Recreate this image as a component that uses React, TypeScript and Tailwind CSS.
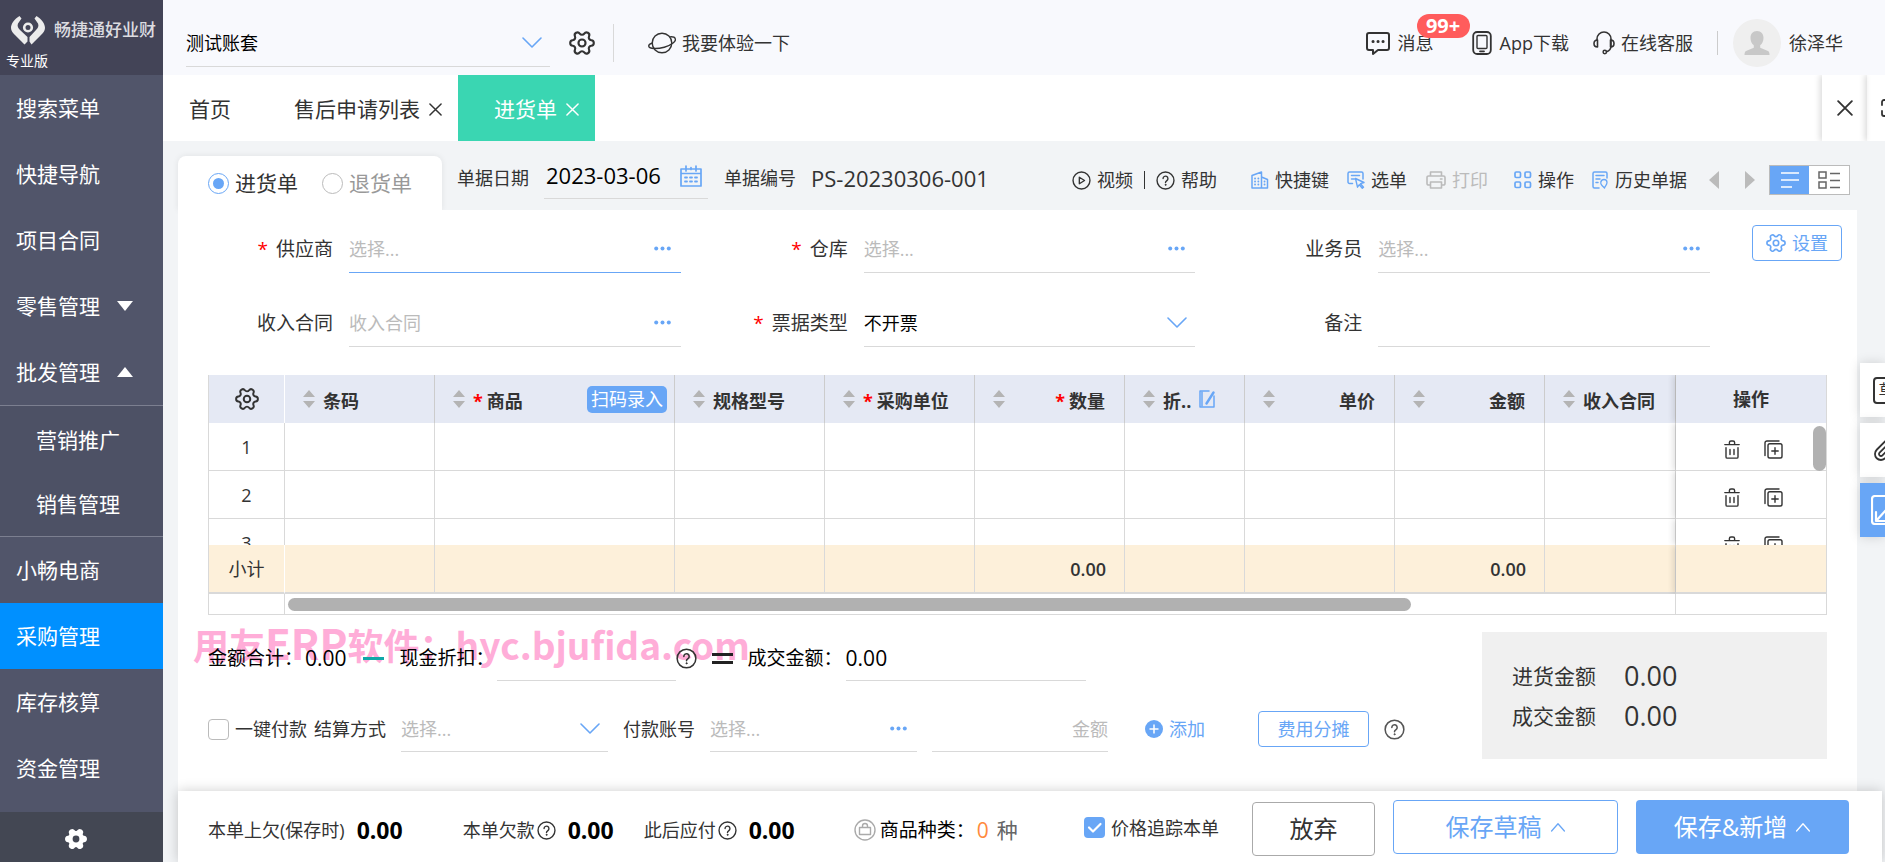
import type { ReactNode } from 'react';
import { clsx } from 'clsx';

const menuTop = [
  { label: '搜索菜单' },
  { label: '快捷导航' },
  { label: '项目合同' },
  { label: '零售管理', arrow: 'down' },
  { label: '批发管理', arrow: 'up' },
];

const subMenu = ['营销推广', '销售管理'];

const menuBottom = [
  { label: '小畅电商' },
  { label: '采购管理', active: true },
  { label: '库存核算' },
  { label: '资金管理' },
];

const columns = [
  { key: 'barcode', label: '条码', width: 'w-[150px]' },
  { key: 'goods', label: '商品', width: 'w-[240px]', required: true, scan: true },
  { key: 'spec', label: '规格型号', width: 'w-[150px]' },
  { key: 'unit', label: '采购单位', width: 'w-[150px]', required: true },
  { key: 'qty', label: '数量', width: 'w-[150px]', required: true, right: true, total: '0.00' },
  { key: 'discount', label: '折..', width: 'w-[120px]', edit: true },
  { key: 'price', label: '单价', width: 'w-[150px]', right: true },
  { key: 'amount', label: '金额', width: 'w-[150px]', right: true, total: '0.00' },
  { key: 'contract', label: '收入合同', width: 'w-[131px]' },
];

const rows = [1, 2, 3];

/* ---------- icons ---------- */

type IconProps = { className?: string };

function Svg({ className, children, box = '0 0 24 24' }: IconProps & { children: ReactNode; box?: string }) {
  return (
    <svg
      viewBox={box}
      className={clsx('shrink-0', className)}
      fill="none"
      stroke="currentColor"
      strokeWidth="1.8"
      strokeLinecap="round"
      strokeLinejoin="round"
      aria-hidden="true"
    >
      {children}
    </svg>
  );
}

const gearPath =
  'M9.671 4.136a2.34 2.34 0 0 1 4.659 0 2.34 2.34 0 0 0 3.319 1.915 2.34 2.34 0 0 1 2.33 4.033 2.34 2.34 0 0 0 0 3.831 2.34 2.34 0 0 1-2.33 4.033 2.34 2.34 0 0 0-3.319 1.915 2.34 2.34 0 0 1-4.659 0 2.34 2.34 0 0 0-3.32-1.915 2.34 2.34 0 0 1-2.33-4.033 2.34 2.34 0 0 0 0-3.831A2.34 2.34 0 0 1 6.35 6.051a2.34 2.34 0 0 0 3.319-1.915';

function Gear({ className }: IconProps) {
  return (
    <Svg className={className} box="1 1 22 22">
      <path d={gearPath} transform="rotate(30 12 12)" />
      <circle cx="12" cy="12" r="3" />
    </Svg>
  );
}

function Chevron({ className, up }: IconProps & { up?: boolean }) {
  return (
    <Svg className={className} box="0 0 20 12">
      <path d={up ? 'M2 11l8-9 8 9' : 'M1 1l9 9 9-9'} strokeWidth="1.6" />
    </Svg>
  );
}

function Close({ className }: IconProps) {
  return (
    <Svg className={className} box="0 0 14 14">
      <path d="M1 1l12 12M13 1L1 13" strokeWidth="1.6" />
    </Svg>
  );
}

function Help({ className }: IconProps) {
  return (
    <Svg className={className} box="0 0 22 22">
      <circle cx="11" cy="11" r="9.8" strokeWidth="1.6" />
      <path d="M8.2 8.8a2.8 2.8 0 1 1 4.4 2.3c-1 .7-1.6 1.2-1.6 2.3" strokeWidth="1.6" />
      <circle cx="11" cy="16" r=".6" fill="currentColor" strokeWidth="1" />
    </Svg>
  );
}

function Play({ className }: IconProps) {
  return (
    <Svg className={className} box="0 0 22 22">
      <circle cx="11" cy="11" r="9.8" strokeWidth="1.6" />
      <path d="M8.5 7.2v7.6l6-3.8z" strokeWidth="1.6" />
    </Svg>
  );
}

function Dots() {
  return (
    <svg viewBox="0 0 17 5" className="h-[5px] w-[17px]" fill="currentColor" aria-hidden="true">
      <circle cx="2.2" cy="2.5" r="2" />
      <circle cx="8.5" cy="2.5" r="2" />
      <circle cx="14.8" cy="2.5" r="2" />
    </svg>
  );
}

function SortArrows() {
  return (
    <svg viewBox="0 0 12 18" className="h-[18px] w-3 shrink-0" fill="#b4b4b4" aria-hidden="true">
      <path d="M6 0l6 7H0zM6 18l6-7H0z" />
    </svg>
  );
}

function Trash() {
  return (
    <Svg className="h-[19px] w-4" box="0 0 16 19">
      <path d="M.8 4.6h14.4M5.4 4.4V2.6a1.6 1.6 0 0 1 1.6-1.6h2a1.6 1.6 0 0 1 1.6 1.6v1.8M2 7.6v9.3a1.2 1.2 0 0 0 1.2 1.2h9.6a1.2 1.2 0 0 0 1.2-1.2V7.6M6 9.5v5M10 9.5v5" strokeWidth="1.4" />
    </Svg>
  );
}

function CopyPlus() {
  return (
    <Svg className="h-[19px] w-[19px]" box="0 0 19 19">
      <rect x="4" y="3.8" width="14" height="14.2" rx="1.8" strokeWidth="1.4" />
      <path d="M11 7.8v6.4M7.8 11h6.4M1 15.5V3A2 2 0 0 1 3 1h12" strokeWidth="1.4" />
    </Svg>
  );
}

function Logo() {
  return (
    <svg viewBox="0 0 36 30" className="h-[30px] w-9 shrink-0" fill="none" stroke="#ececec" aria-hidden="true">
      <path d="M9.5 1C4.5 4 1 8.500 1 13c0 3 2 5 4.500 7.500L14.500 29.500l3-3v-4.500L10 15c-2-2-3-4-2-6.500L11.500 3.500z" fill="#ececec" stroke="none" />
      <path d="M26.500 1C31.500 4 35 8.500 35 13c0 3-2 5-4.500 7.500L21.500 29.500l-2-3v-4.500L26 15c2-2 3-4 2-6.500L24.500 3.500z" fill="#ececec" stroke="none" />
      <circle cx="18" cy="12.500" r="3.800" strokeWidth="2.600" />
    </svg>
  );
}

/* ---------- small parts ---------- */

function Tool({ icon, label, className }: { icon: ReactNode; label: string; className?: string }) {
  return (
    <button type="button" className={clsx('flex shrink-0 items-center gap-1.5 whitespace-nowrap', className)}>
      {icon}
      {label}
    </button>
  );
}

function Radio({ label, checked }: { label: string; checked?: boolean }) {
  return (
    <label className={clsx('flex items-center gap-1.5 text-[21px]', checked ? 'text-[#333]' : 'text-[#999]')}>
      <input
        type="radio"
        name="orderType"
        defaultChecked={checked}
        className="h-[21px] w-[21px] appearance-none rounded-full border border-[#bbb] bg-white bg-clip-content p-1 checked:border-[#68a6f6] checked:bg-[#68a6f6]"
      />
      {label}
    </label>
  );
}

type FieldProps = {
  id: string;
  label: string;
  placeholder?: string;
  required?: boolean;
  focused?: boolean;
  lookup?: boolean;
  option?: string;
};

function Field({ id, label, placeholder, required, focused, lookup, option }: FieldProps) {
  return (
    <div className="flex items-center gap-4">
      <label htmlFor={id} className="flex w-[155px] shrink-0 items-center justify-end gap-2 text-[19px]">
        {required && <span className="text-[#f00]">*</span>}
        {label}
      </label>
      <div className={clsx('relative flex h-12 flex-1 items-center border-b', focused ? 'border-[#68a6f6]' : 'border-[#d9d9d9]')}>
        {option ? (
          <select id={id} className="h-full w-full appearance-none text-lg text-black outline-none">
            <option>{option}</option>
          </select>
        ) : (
          <input id={id} placeholder={placeholder} className="h-full w-full text-lg outline-none placeholder:text-[#bbb]" />
        )}
        {option && <Chevron className="pointer-events-none absolute right-2 h-3 w-5 text-[#68a6f6]" />}
        {lookup && (
          <button type="button" aria-label="更多" className="absolute right-2.5 text-[#68a6f6]">
            <Dots />
          </button>
        )}
      </div>
    </div>
  );
}

/* ---------- page parts ---------- */

function Sidebar() {
  return (
    <aside className="flex w-[163px] shrink-0 flex-col bg-[#51556a] text-[21px] text-white">
      <div className="flex h-[75px] flex-col justify-end gap-1.5 bg-[#434457] pb-1">
        <div className="flex items-center gap-2 pl-2.5">
          <Logo />
          <span className="text-[17px] leading-6 font-medium whitespace-nowrap text-[#dcdce0]">畅捷通好业财</span>
        </div>
        <span className="pl-1.5 text-sm leading-5">专业版</span>
      </div>
      <nav className="flex flex-1 flex-col">
        {menuTop.map((item) => (
          <a key={item.label} href="#" className="flex h-[66px] items-center gap-[17px] pl-4">
            {item.label}
            {item.arrow && (
              <svg viewBox="0 0 16 10" className="h-2.5 w-4" fill="currentColor" aria-hidden="true">
                <path d={item.arrow === 'up' ? 'M8 0l8 10H0z' : 'M8 10L0 0h16z'} />
              </svg>
            )}
          </a>
        ))}
        <div className="border-y border-[#7c7f90] bg-[#4d5165] pt-0.5">
          {subMenu.map((label) => (
            <a key={label} href="#" className="flex h-16 items-center pl-9">
              {label}
            </a>
          ))}
        </div>
        {menuBottom.map((item) => (
          <a key={item.label} href="#" className={clsx('flex h-[66px] items-center pl-4', item.active && 'bg-[#0090ff]')}>
            {item.label}
          </a>
        ))}
      </nav>
      <button type="button" aria-label="设置" className="flex h-[50px] items-center bg-[#434753] pt-1 pl-[65px]">
        <svg viewBox="1 1 22 22" className="h-[22px] w-[22px]" aria-hidden="true">
          <path d={gearPath} transform="rotate(30 12 12)" fill="#fff" stroke="#fff" strokeWidth="2" />
          <circle cx="12" cy="12" r="3.400" fill="#434753" />
        </svg>
      </button>
    </aside>
  );
}

function TopBar() {
  return (
    <header className="flex h-[75px] shrink-0 items-center bg-[#f8f9fd] pt-[11px] pr-[42px] pl-[23px] text-lg text-[#333]">
      <div className="relative flex h-12 w-[364px] items-center border-b border-[#d9d9d9]">
        <select aria-label="账套" className="h-full w-full appearance-none text-lg text-black outline-none">
          <option>测试账套</option>
        </select>
        <Chevron className="pointer-events-none absolute right-2 h-3 w-5 text-[#68a6f6]" />
      </div>
      <button type="button" aria-label="设置" className="ml-[19px]">
        <Gear className="h-[26px] w-[26px]" />
      </button>
      <span className="mr-5 ml-[18px] h-[38px] w-px bg-[#d9d9d9]" />
      <a href="#" className="ml-[14px] flex items-center gap-1.5">
        <Svg className="h-6 w-7" box="0 0 28 24">
          <circle cx="14" cy="12" r="9.800" strokeWidth="1.400" />
          <path d="M4.500 12C1.800 12.800.5 14 .8 15.200c.8 2.800 8 3 15.500 1S28.500 10 27.200 7.500c-.5-1.300-2-1.800-4.500-1.700" strokeWidth="1.400" />
        </Svg>
        我要体验一下
      </a>

      <div className="ml-auto flex items-center">
        <a href="#" className="relative flex items-center gap-2">
          <Svg className="h-6 w-6 text-[#333]">
            <path d="M3 2h18a2 2 0 0 1 2 2v13a2 2 0 0 1-2 2H12l-5 4v-4H3a2 2 0 0 1-2-2V4a2 2 0 0 1 2-2z" strokeWidth="2" />
            <path d="M7 10.500h.1M12 10.500h.1M17 10.500h.1" strokeWidth="3" />
          </Svg>
          消息
          <span className="absolute -top-[15px] left-[51px] flex h-6 w-[53px] items-center justify-center rounded-full bg-[#ff5c5c] text-xl font-bold text-white">
            99+
          </span>
        </a>
        <a href="#" className="ml-[38px] flex items-center gap-2">
          <Svg className="h-6 w-5" box="0 0 20 24">
            <rect x="1.200" y="1" width="17.600" height="22" rx="4" />
            <rect x="5" y="4.500" width="10" height="13" rx="1" strokeWidth="1.400" />
            <path d="M8 20.300h4" />
          </Svg>
          App下载
        </a>
        <a href="#" className="ml-6 flex items-center gap-1.5">
          <Svg className="h-6 w-[22px]" box="0 0 22 24">
            <path d="M4 8.500V8a7 7 0 0 1 14 0v7c0 3-2 5-4.500 5.800" strokeWidth="1.600" />
            <path d="M4.500 9C2 9 1 10.500 1 12.500S2 16 4.500 16zM17.500 9c2.500 0 3.500 1.500 3.500 3.500S20 16 17.500 16z" strokeWidth="1.600" />
            <circle cx="11.800" cy="21" r="1.700" strokeWidth="1.500" />
          </Svg>
          在线客服
        </a>
        <span className="ml-6 h-6 w-px bg-[#ccc]" />
        <a href="#" className="ml-[15px] flex items-center gap-2">
          <svg viewBox="0 0 48 48" className="h-12 w-12" aria-hidden="true">
            <circle cx="24" cy="24" r="24" fill="#efefef" />
            <path d="M24 12c-4.200 0-6.500 3-6.500 7 0 3.200 1.300 5.800 3.300 7.200v2.600L13 32c-1 .6-1.500 2-1.500 4h25c0-2-.5-3.400-1.500-4l-7.800-3.200v-2.600c2-1.400 3.300-4 3.300-7.200 0-4-2.300-7-6.500-7z" fill="#c8c8c8" />
          </svg>
          徐泽华
        </a>
      </div>
    </header>
  );
}

function TabBar() {
  return (
    <div className="flex h-[66px] shrink-0 overflow-hidden bg-white text-[21px] text-[#333]">
      <button type="button" className="pt-0.5 pr-[31px] pl-[26px]">首页</button>
      <div className="flex items-center gap-[9px] pt-0.5 pr-4 pl-8">
        <button type="button">售后申请列表</button>
        <button type="button" aria-label="关闭">
          <Close className="h-[13px] w-[13px]" />
        </button>
      </div>
      <div className="flex items-center gap-[9px] bg-[#3ad6b2] pt-0.5 pr-4 pl-9 text-white">
        <button type="button">进货单</button>
        <button type="button" aria-label="关闭">
          <Close className="h-[13px] w-[13px]" />
        </button>
      </div>
      <div className="ml-auto flex">
        <button type="button" aria-label="关闭全部" className="w-[45px] pl-[15px] shadow-[-2px_0_6px_rgba(0,0,0,0.15)]">
          <Close className="h-4 w-4" />
        </button>
        <button type="button" aria-label="全屏" className="w-[18px] overflow-hidden pl-[14px] shadow-[-2px_0_6px_rgba(0,0,0,0.15)]">
          <Svg className="h-[18px] w-[18px]" box="0 0 18 18">
            <path d="M1 6V3a2 2 0 0 1 2-2h3M12 1h3a2 2 0 0 1 2 2v3M1 12v3a2 2 0 0 0 2 2h3M12 17h3a2 2 0 0 0 2-2v-3" />
          </Svg>
        </button>
      </div>
    </div>
  );
}

function DocBar() {
  return (
    <div className="flex shrink-0 pt-[15px] pr-[35px] text-lg text-[#333]">
      <div className="flex h-[54px] w-[264px] shrink-0 items-center gap-6 rounded-t-lg bg-white pl-[30px] shadow-[0_0_6px_rgba(0,0,0,0.08)]">
        <Radio label="进货单" checked />
        <Radio label="退货单" />
      </div>
      <div className="flex flex-1 items-center pb-2.5 pl-[15px]">
        <label htmlFor="docDate" className="shrink-0">单据日期</label>
        <div className="ml-[15px] flex h-[42px] w-[164px] shrink-0 items-center justify-between border-b border-[#d9d9d9] pr-1.5 pb-1">
          <input id="docDate" defaultValue="2023-03-06" className="w-[122px] pl-0.5 text-[22px] text-black outline-none" />
          <Svg className="h-[22px] w-[22px] text-[#68a6f6]" box="0 0 22 22">
            <path d="M1 4h20v17H1zM1 8.500h20M6 1v5M16 1v5M11 2.500v2" strokeWidth="1.700" />
            <path d="M5 12.500h12M5 16.500h12" strokeWidth="1.800" strokeDasharray="2 3" />
          </Svg>
        </div>
        <span className="ml-4 shrink-0">单据编号</span>
        <span className="ml-[15px] text-[22px]">PS-20230306-001</span>

        <div className="ml-auto flex items-center pt-1">
          <Tool icon={<Play className="h-[19px] w-[19px]" />} label="视频" />
          <span className="mx-[11px] h-[18px] w-px bg-[#333]" />
          <Tool icon={<Help className="h-[19px] w-[19px]" />} label="帮助" />
          <Tool
            className="ml-[34px]"
            label="快捷键"
            icon={
              <Svg className="h-[18px] w-[18px] text-[#68a6f6]" box="0 0 18 18">
                <path d="M1 4.500L10.500 1v16H1zM10.500 6l6 2.500V17h-6" strokeWidth="1.500" />
                <path d="M4 7.500h.1M7.300 7.500h.1M4 10.500h.1M7.300 10.500h.1M4 13.500h.1M7.300 13.500h.1M13.500 10.500h.1M13.500 13.500h.1" strokeWidth="1.800" />
              </Svg>
            }
          />
          <Tool
            className="ml-[18px]"
            label="选单"
            icon={
              <Svg className="h-[18px] w-[18px] text-[#68a6f6]" box="0 0 18 18">
                <path d="M5.500 12.500H2.500A1.500 1.500 0 0 1 1 11V2.500A1.500 1.500 0 0 1 2.500 1h12A1.500 1.500 0 0 1 16 2.500V8M4.500 4.500h8M4.500 8h3" strokeWidth="1.500" />
                <path d="M8.500 7.500l8.500 4-3.500 1.200 3 3.500-1.200 1-3-3.500-1.800 2.500z" strokeWidth="1.400" />
              </Svg>
            }
          />
          <Tool
            className="ml-[19px] text-[#bbb]"
            label="打印"
            icon={
              <Svg className="h-[18px] w-5" box="0 0 20 18">
                <path d="M4.500 5V1h11v4M4.500 14H2.500A1.500 1.500 0 0 1 1 12.500v-6A1.500 1.500 0 0 1 2.500 5h15A1.500 1.500 0 0 1 19 6.500v6a1.500 1.500 0 0 1-1.500 1.500h-2M4.500 11h11v6h-11zM14.500 8h1.500" strokeWidth="1.600" />
              </Svg>
            }
          />
          <Tool
            className="ml-[26px]"
            label="操作"
            icon={
              <Svg className="h-[18px] w-[18px] text-[#68a6f6]" box="0 0 18 18">
                <rect x="1" y="1" width="5.500" height="5.500" rx="1.200" strokeWidth="1.700" />
                <rect x="11" y="1" width="5.500" height="5.500" rx="1.200" strokeWidth="1.700" />
                <rect x="1" y="11" width="5.500" height="5.500" rx="1.200" strokeWidth="1.700" />
                <rect x="11" y="11" width="5.500" height="5.500" rx="1.200" strokeWidth="1.700" />
              </Svg>
            }
          />
          <Tool
            className="ml-[18px]"
            label="历史单据"
            icon={
              <Svg className="h-[18px] w-[17px] text-[#68a6f6]" box="0 0 17 18">
                <path d="M7 17H2.500A1.500 1.500 0 0 1 1 15.500v-13A1.500 1.500 0 0 1 2.500 1h11A1.500 1.500 0 0 1 15 2.500V7M4 4.500h8M4 8h4M4 11.500h2" strokeWidth="1.500" />
                <path d="M12 8.500c1.500 0 3 1 3 3 0 2.500-2 3.500-2.500 5.500L10 14.500c-1-1-1.500-2-1.200-3.500.4-1.500 1.700-2.500 3.200-2.500z" strokeWidth="1.300" />
              </Svg>
            }
          />
          <button type="button" aria-label="上一张" className="ml-[22px]">
            <svg viewBox="0 0 10 18" className="h-[18px] w-2.5" fill="#bbb"><path d="M10 0v18L0 9z" /></svg>
          </button>
          <button type="button" aria-label="下一张" className="ml-[26px]">
            <svg viewBox="0 0 10 18" className="h-[18px] w-2.5" fill="#bbb"><path d="M0 0v18l10-9z" /></svg>
          </button>
          <div className="ml-[14px] flex h-[30px] w-[81px] shrink-0 border border-[#bbb] bg-white">
            <button type="button" aria-label="列表" className="flex w-[39px] items-center justify-center bg-[#68a6f6] text-white">
              <Svg className="h-4 w-[18px]" box="0 0 18 16">
                <path d="M0 1h18M0 8h18M0 15h11" strokeWidth="1.600" strokeLinecap="butt" />
              </Svg>
            </button>
            <button type="button" aria-label="卡片" className="flex flex-1 items-center justify-center text-[#666]">
              <Svg className="h-[18px] w-[22px]" box="0 0 22 18">
                <path d="M1 1h7v6H1zM1 11h7v6H1zM12 2.500h10M12 9.500h10M12 16.500h10" strokeWidth="1.500" strokeLinejoin="miter" strokeLinecap="butt" />
              </Svg>
            </button>
          </div>
        </div>
      </div>
    </div>
  );
}

const fixedShadow = 'shadow-[-3px_0_6px_rgba(0,0,0,0.12)] [clip-path:inset(0_0_0_-8px)]';

function GoodsTable() {
  return (
    <div className="mx-[30px] mt-7 border-x border-[#d9d9d9] text-lg text-[#333]">
      <table className="w-full table-fixed border-separate border-spacing-0">
        <thead>
          <tr className="h-12 bg-[#e5e9f4] text-left">
            <th className="w-[76px] border-r border-white">
              <button type="button" aria-label="列设置" className="flex w-full justify-center">
                <Gear className="h-6 w-6" />
              </button>
            </th>
            {columns.map((col) => (
              <th key={col.key} className={clsx('border-r border-[#ccc] font-bold', col.width)}>
                <div className="flex items-center gap-2 pr-[7px] pl-[18px] whitespace-nowrap">
                  <SortArrows />
                  <span className={clsx('flex items-center gap-1 pt-1', col.right && 'ml-auto pr-3')}>
                    {col.required && <span className="text-[#f00]">*</span>}
                    {col.label}
                  </span>
                  {col.scan && (
                    <button type="button" className="ml-auto h-[27px] rounded-[5px] bg-[#68a6f6] px-1 leading-6 font-normal text-white">
                      扫码录入
                    </button>
                  )}
                  {col.edit && (
                    <Svg className="h-[18px] w-4 text-[#68a6f6]" box="0 0 16 18">
                      <path d="M10 1H1v16h14V6" strokeWidth="1.500" />
                      <path d="M3 2v14" strokeWidth="1.500" />
                      <path d="M14.500 2.500L7.500 13.500" strokeWidth="2.400" />
                    </Svg>
                  )}
                </div>
              </th>
            ))}
            <th className={clsx('bg-[#e5e9f4] text-center font-bold', fixedShadow)}>操作</th>
          </tr>
        </thead>
        <tbody>
          {rows.map((n) => {
            const cut = n === rows.length;
            const line = cut ? '' : 'border-b';
            return (
              <tr key={n}>
                <td className={clsx('border-r border-[#d9d9d9] p-0 text-center', line)}>
                  <div className={clsx('overflow-hidden leading-[49px]', cut ? 'h-[26px]' : 'h-[47px]')}>{n}</div>
                </td>
                {columns.map((col) => (
                  <td key={col.key} className={clsx('border-r border-[#d9d9d9] p-0', line)} />
                ))}
                <td className={clsx('relative border-[#d9d9d9] bg-white p-0', fixedShadow, line)}>
                  <div className={clsx('overflow-hidden', cut ? 'h-[26px]' : 'h-[47px]')}>
                    <div className="flex h-[53px] items-center justify-center gap-6 pl-1">
                      <button type="button" aria-label="删除">
                        <Trash />
                      </button>
                      <button type="button" aria-label="复制">
                        <CopyPlus />
                      </button>
                    </div>
                  </div>
                  {n === 1 && <span className="absolute top-[3px] right-0 h-[45px] w-[13px] rounded-full bg-[#b1b1b1]" />}
                </td>
              </tr>
            );
          })}
        </tbody>
        <tfoot>
          <tr className="h-[49px] bg-[#fdf0da]">
            <td className="border-r border-b-2 border-r-white border-b-[#d9d9d9] text-center">小计</td>
            {columns.map((col) => (
              <td key={col.key} className="border-r border-b-2 border-[#d9d9d9] pr-[18px] text-right font-semibold">
                {col.total}
              </td>
            ))}
            <td className={clsx('border-b-2 border-[#d9d9d9] bg-[#fdf0da]', fixedShadow)} />
          </tr>
        </tfoot>
      </table>
      <div className="flex h-[21px] border-b border-[#d9d9d9]">
        <div className="w-[76px] border-r border-[#d9d9d9]" />
        <div className="flex flex-1 items-center border-r border-[#d9d9d9] pl-[3px]">
          <div className="h-[13px] w-[81%] rounded-full bg-[#b1b1b1]" />
        </div>
        <div className="w-[150px]" />
      </div>
    </div>
  );
}

function Settlement() {
  return (
    <section className="relative mx-[30px] mt-[17px] flex justify-between">
      <p className="pointer-events-none absolute -top-2.5 -left-[15px] font-['Noto_Sans_CJK_SC',sans-serif] text-4xl leading-10 font-bold whitespace-nowrap text-[#ffadd8]">
        用友<span className="text-[42px]">ERP</span>软件：<span className="text-[37px]">hyc.bjufida.com</span>
      </p>
      <div className="relative pt-1 text-lg text-[#333]">
        <div className="flex items-center text-[19px] text-black">
          <span>金额合计：</span>
          <span className="ml-0.5 text-[21px]">0.00</span>
          <span className="mx-4 h-[3px] w-[21px] bg-[#0fa8a8]" />
          <label htmlFor="cashDiscount">现金折扣：</label>
          <input id="cashDiscount" className="ml-0.5 h-[45px] w-[179px] border-b border-[#d9d9d9] outline-none" />
          <Help className="h-[21px] w-[21px] text-[#333]" />
          <span className="mx-[15px] h-[11px] w-[21px] border-y-3 border-[#222]" />
          <label htmlFor="dealAmount">成交金额：</label>
          <input id="dealAmount" defaultValue="0.00" className="ml-[3px] h-[45px] w-[240px] border-b border-[#d9d9d9] text-[21px] outline-none" />
        </div>
        <div className="mt-[25px] flex items-center">
          <label className="flex items-center gap-1.5">
            <input type="checkbox" className="h-[21px] w-[21px] appearance-none rounded border border-[#bbb] bg-white" />
            一键付款
          </label>
          <label htmlFor="payMethod" className="ml-[7px]">结算方式</label>
          <div className="relative ml-[15px] flex h-[46px] w-[207px] items-center border-b border-[#d9d9d9]">
            <select id="payMethod" className="h-full w-full appearance-none text-[#bbb] outline-none">
              <option>选择...</option>
            </select>
            <Chevron className="pointer-events-none absolute right-2 h-3 w-5 text-[#68a6f6]" />
          </div>
          <label htmlFor="payAccount" className="ml-[15px]">付款账号</label>
          <div className="relative ml-[15px] flex h-[46px] w-[207px] items-center border-b border-[#d9d9d9]">
            <input id="payAccount" placeholder="选择..." className="h-full w-full outline-none placeholder:text-[#bbb]" />
            <button type="button" aria-label="更多" className="absolute right-2.5 text-[#68a6f6]">
              <Dots />
            </button>
          </div>
          <input
            aria-label="金额"
            placeholder="金额"
            className="ml-[15px] h-[46px] w-[176px] border-b border-[#d9d9d9] text-right outline-none placeholder:text-[#bbb]"
          />
          <button type="button" className="ml-[37px] flex items-center gap-1.5 text-[#68a6f6]">
            <svg viewBox="0 0 18 18" className="h-[18px] w-[18px]" aria-hidden="true">
              <circle cx="9" cy="9" r="9" fill="#68a6f6" />
              <path d="M9 4.500v9M4.500 9h9" stroke="#fff" strokeWidth="1.500" />
            </svg>
            添加
          </button>
          <button type="button" className="ml-[53px] h-9 w-[111px] rounded border border-[#68a6f6] text-[#68a6f6]">费用分摊</button>
          <Help className="ml-[15px] h-[21px] w-[21px] text-[#555]" />
        </div>
      </div>
      <dl className="flex h-[127px] w-[345px] flex-col justify-center bg-[#f0f0f0] pl-[30px] text-[21px] text-[#333]">
        {['进货金额', '成交金额'].map((label) => (
          <div key={label} className="flex h-10 items-center gap-7">
            <dt>{label}</dt>
            <dd className="text-[27px]">0.00</dd>
          </div>
        ))}
      </dl>
    </section>
  );
}

function ActionBar() {
  return (
    <footer className="relative mr-[3px] flex h-[71px] shrink-0 items-center bg-white pt-0.5 pr-[33px] pl-[30px] text-lg text-[#333] shadow-[0_0_12px_rgba(0,0,0,0.2)]">
      <div className="flex items-center pt-1.5">
        <span>本单上欠(保存时)</span>
        <b className="ml-3 text-[23px] font-bold text-black">0.00</b>
        <span className="ml-[60px]">本单欠款</span>
        <Help className="ml-0.5 h-[19px] w-[19px]" />
        <b className="ml-3 text-[23px] font-bold text-black">0.00</b>
        <span className="ml-[30px]">此后应付</span>
        <Help className="ml-0.5 h-[19px] w-[19px]" />
        <b className="ml-3 text-[23px] font-bold text-black">0.00</b>
        <Svg className="ml-[59px] h-[22px] w-[22px] text-[#aaa]" box="0 0 22 22">
          <circle cx="11" cy="11" r="10" strokeWidth="1.400" />
          <path d="M5.500 8.500h11v7h-11zM8.500 8.500V7a2.500 2.500 0 0 1 5 0v1.500" strokeWidth="1.400" />
        </Svg>
        <span className="ml-1 text-[19px] text-black">商品种类：</span>
        <span className="ml-0.5 text-[21px] text-[#ff8a3c]">0</span>
        <span className="ml-2 text-[21px] text-[#666]">种</span>
      </div>
      <label className="mr-[33px] ml-auto flex items-center gap-1.5">
        <span className="relative h-[21px] w-[21px]">
          <input type="checkbox" defaultChecked className="h-full w-full appearance-none rounded bg-[#68a6f6]" />
          <Svg className="pointer-events-none absolute inset-0 h-[21px] w-[21px] text-white" box="0 0 21 21">
            <path d="M5 10.500l4 4 7.500-7.500" strokeWidth="2.200" />
          </Svg>
        </span>
        价格追踪本单
      </label>
      <div className="flex gap-[18px] text-2xl">
        <button type="button" className="mt-0.5 h-[54px] w-[123px] rounded border border-[#aaa] text-[#333]">放弃</button>
        <button type="button" className="flex h-[54px] w-[225px] items-center justify-center gap-2 rounded border border-[#68a6f6] text-[#68a6f6]">
          保存草稿
          <Chevron up className="h-2.5 w-4" />
        </button>
        <button type="button" className="flex h-[54px] w-[213px] items-center justify-center gap-2 rounded bg-[#68a6f6] text-white">
          保存&amp;新增
          <Chevron up className="h-2.5 w-4" />
        </button>
      </div>
    </footer>
  );
}

function FloatingTools() {
  return (
    <div className="absolute top-[363px] right-0 flex w-[25px] flex-col gap-1.5 text-[#333]">
      <button type="button" aria-label="草稿" className="h-[54px] overflow-hidden bg-white pl-[13px] shadow-[0_0_12px_rgba(0,0,0,0.15)]">
        <span className="flex h-[27px] w-[27px] items-center justify-center rounded border-2 border-[#333] text-base">草</span>
      </button>
      <button type="button" aria-label="附件" className="h-[54px] overflow-hidden bg-white pl-[13px] shadow-[0_0_12px_rgba(0,0,0,0.15)]">
        <Svg className="h-6 w-6">
          <path d="M21.400 11.050l-9.190 9.190a6 6 0 0 1-8.490-8.490l8.570-8.570A4 4 0 1 1 18 8.840l-8.590 8.570a2 2 0 0 1-2.830-2.830l8.490-8.480" />
        </Svg>
      </button>
      <button type="button" aria-label="展开" className="h-[54px] overflow-hidden bg-[#68a6f6] pl-[11px] text-white shadow-[0_0_12px_rgba(0,0,0,0.15)]">
        <Svg className="h-[30px] w-[30px]" box="0 0 30 30">
          <rect x="1" y="1" width="28" height="28" rx="3" strokeWidth="2.200" />
          <path d="M5 17v9h9M5 26l11-12" strokeWidth="2.200" />
        </Svg>
      </button>
    </div>
  );
}

export default function App() {
  return (
    <div className="relative flex h-screen overflow-hidden bg-[#f2f4f6] font-['Open_Sans','Noto_Sans_CJK_SC',sans-serif] leading-7">
      <Sidebar />
      <div className="flex min-w-0 flex-1 flex-col">
        <TopBar />
        <TabBar />
        <div className="flex min-h-0 flex-1 flex-col pl-[15px]">
          <DocBar />
          <main className="mr-7 min-h-0 flex-1 overflow-hidden bg-white pt-[15px]">
            <div className="flex items-start text-[#333]">
              <form className="grid flex-1 grid-cols-3 gap-x-3 gap-y-[26px]">
                <Field id="supplier" label="供应商" placeholder="选择..." required focused lookup />
                <Field id="warehouse" label="仓库" placeholder="选择..." required lookup />
                <Field id="clerk" label="业务员" placeholder="选择..." lookup />
                <Field id="contract" label="收入合同" placeholder="收入合同" lookup />
                <Field id="invoice" label="票据类型" option="不开票" required />
                <Field id="remark" label="备注" />
              </form>
              <button type="button" className="mr-[15px] ml-[42px] flex h-9 w-[90px] items-center justify-center gap-1.5 rounded border border-[#68a6f6] text-lg text-[#68a6f6]">
                <Gear className="h-5 w-5" />
                设置
              </button>
            </div>
            <GoodsTable />
            <Settlement />
          </main>
          <ActionBar />
        </div>
      </div>
      <FloatingTools />
    </div>
  );
}
